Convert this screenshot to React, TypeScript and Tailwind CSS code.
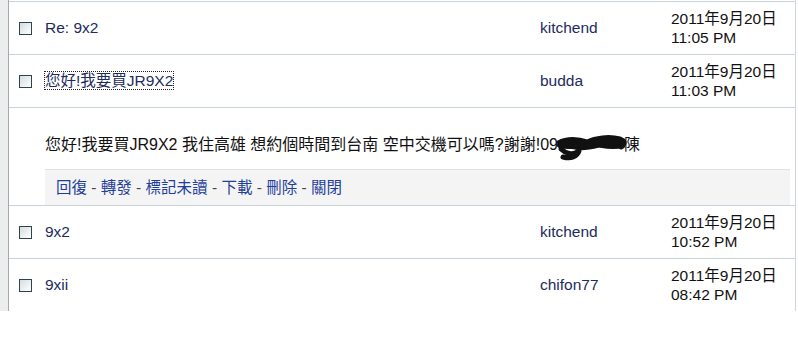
import React from "react";

const font = "font-['Liberation_Sans','Noto_Sans_CJK_TC',sans-serif]";

function Check() {
  return (
    <div className="w-[13px] h-[13px] border border-[#2b4450] bg-gradient-to-br from-[#d6dcdf] to-white" />
  );
}

function Row({ subject, sender, date, time, focus }: { subject: string; sender: string; date: string; time: string; focus?: boolean }) {
  return (
    <div className="h-[53px] border-t border-[#c9d3da] grid grid-cols-[36px_495px_131px_1fr] items-center">
      <div className="pl-[10px] flex items-center">
        <Check />
      </div>
      <div className="text-[#1d2b5e]">
        <span className={focus ? "outline outline-1 outline-dotted outline-[#222] outline-offset-0" : ""}>{subject}</span>
      </div>
      <div className="text-[#1d2b5e]">{sender}</div>
      <div className="text-[#111] leading-[19px]">
        <div>{date}</div>
        <div>{time}</div>
      </div>
    </div>
  );
}

function Scribble() {
  return (
    <span className="relative inline-block w-[66px] h-[16px] align-middle">
      <svg className="absolute left-[-3px] top-[-6px]" width="74" height="32" viewBox="0 0 74 32">
        <g fill="#111" stroke="#111" strokeLinecap="round" strokeLinejoin="round">
          <path d="M3 10 C12 5, 24 6, 32 9 C40 5, 54 3, 65 6 C70 8, 72 11, 68 14 C60 17, 50 15, 44 14 C36 16, 28 18, 20 16 C14 15, 7 15, 3 10 Z" strokeWidth="3" />
          <path d="M5 13 C13 15, 21 13, 29 14" strokeWidth="6" fill="none" />
          <path d="M6 17 C10 21, 18 24, 24 19 C22 25, 16 27, 8 25" strokeWidth="5" fill="none" />
          <path d="M40 10 C48 12, 56 13, 62 11" strokeWidth="6" fill="none" />
          <path d="M62 7 C68 9, 70 13, 66 15" strokeWidth="5" fill="none" />
        </g>
      </svg>
    </span>
  );
}

export default function App() {
  return (
    <div className={`w-[798px] h-[342px] bg-white text-[15.5px] ${font}`}>
      <div className="flex h-[311px]">
        <div className="w-[9px] bg-[#eceeee] border-r border-[#a3abb0]" />
        <div className="w-[787px] border-r border-[#cfd6da] pt-[1px] flex flex-col">
          <Row subject="Re: 9x2" sender="kitchend" date="2011年9月20日" time="11:05 PM" />
          <Row subject="您好!我要買JR9X2" sender="budda" date="2011年9月20日" time="11:03 PM" focus />
          <div className="h-[98px] border-t border-[#c9d3da] flex flex-col">
            <div className="h-[61px] pl-[36px] pt-[27px] leading-[19px] text-[16px] text-[#111] whitespace-nowrap">
              您好!我要買JR9X2 我住高雄 想約個時間到台南 空中交機可以嗎?謝謝!09
              <Scribble />陳
            </div>
            <div className="h-[36px] ml-[36px] mr-[5px] bg-[#f4f4f4] border-t border-[#e2e2e2] flex items-center pl-[11px] text-[#1f3f9c]">
              <span>回復</span>
              <span className="text-[#444]">&nbsp;-&nbsp;</span>
              <span>轉發</span>
              <span className="text-[#444]">&nbsp;-&nbsp;</span>
              <span>標記未讀</span>
              <span className="text-[#444]">&nbsp;-&nbsp;</span>
              <span>下載</span>
              <span className="text-[#444]">&nbsp;-&nbsp;</span>
              <span>刪除</span>
              <span className="text-[#444]">&nbsp;-&nbsp;</span>
              <span>關閉</span>
            </div>
          </div>
          <Row subject="9x2" sender="kitchend" date="2011年9月20日" time="10:52 PM" />
          <Row subject="9xii" sender="chifon77" date="2011年9月20日" time="08:42 PM" />
        </div>
      </div>
    </div>
  );
}
